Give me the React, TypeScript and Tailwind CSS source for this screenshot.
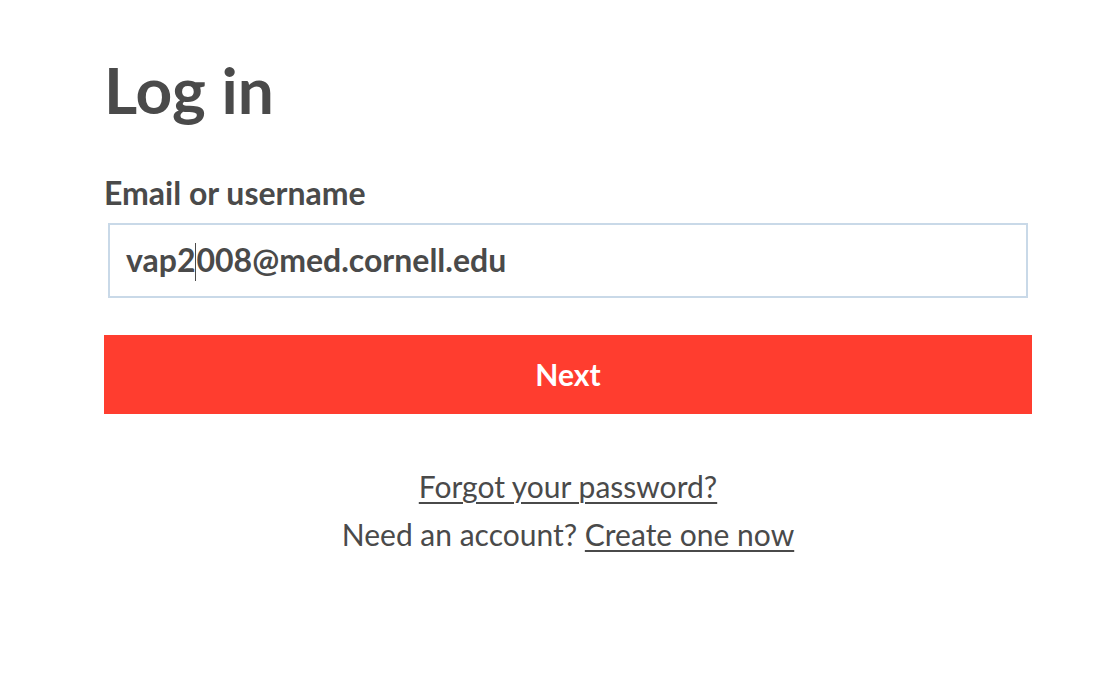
export default function App() {
  return (
    <div
      className="w-[1106px] h-[684px] bg-white text-[#4a4a4a]"
      style={{ fontFamily: "Lato, 'Open Sans', sans-serif" }}
    >
      <div className="ml-[104px] w-[928px] pt-[50px]">
        <h1 className="text-[64px] font-bold leading-[80px] text-[#4a4a4a]">Log in</h1>
        <label className="block mt-[43px] text-[32px] font-bold leading-[40px]">Email or username</label>
        <div className="mx-[4px] mt-[10px] h-[75px] border-2 border-[#c9d9e8] flex items-center px-[16px]">
          <span className="text-[32px] font-bold leading-[40px]">
            vap2<span className="inline-block w-px h-[38px] bg-[#4a4a4a] align-middle -mt-1"></span>008@med.cornell.edu
          </span>
        </div>
        <button className="block mt-[37px] w-full h-[79px] bg-[#ff3d2f] text-white text-[30px] font-bold">Next</button>
        <div className="mt-[48px] text-center text-[30px] leading-[48px]">
          <div><a className="underline decoration-2 underline-offset-[4px]">Forgot your password?</a></div>
          <div>
            Need an account? <a className="underline decoration-2 underline-offset-[4px]">Create one now</a>
          </div>
        </div>
      </div>
    </div>
  );
}
